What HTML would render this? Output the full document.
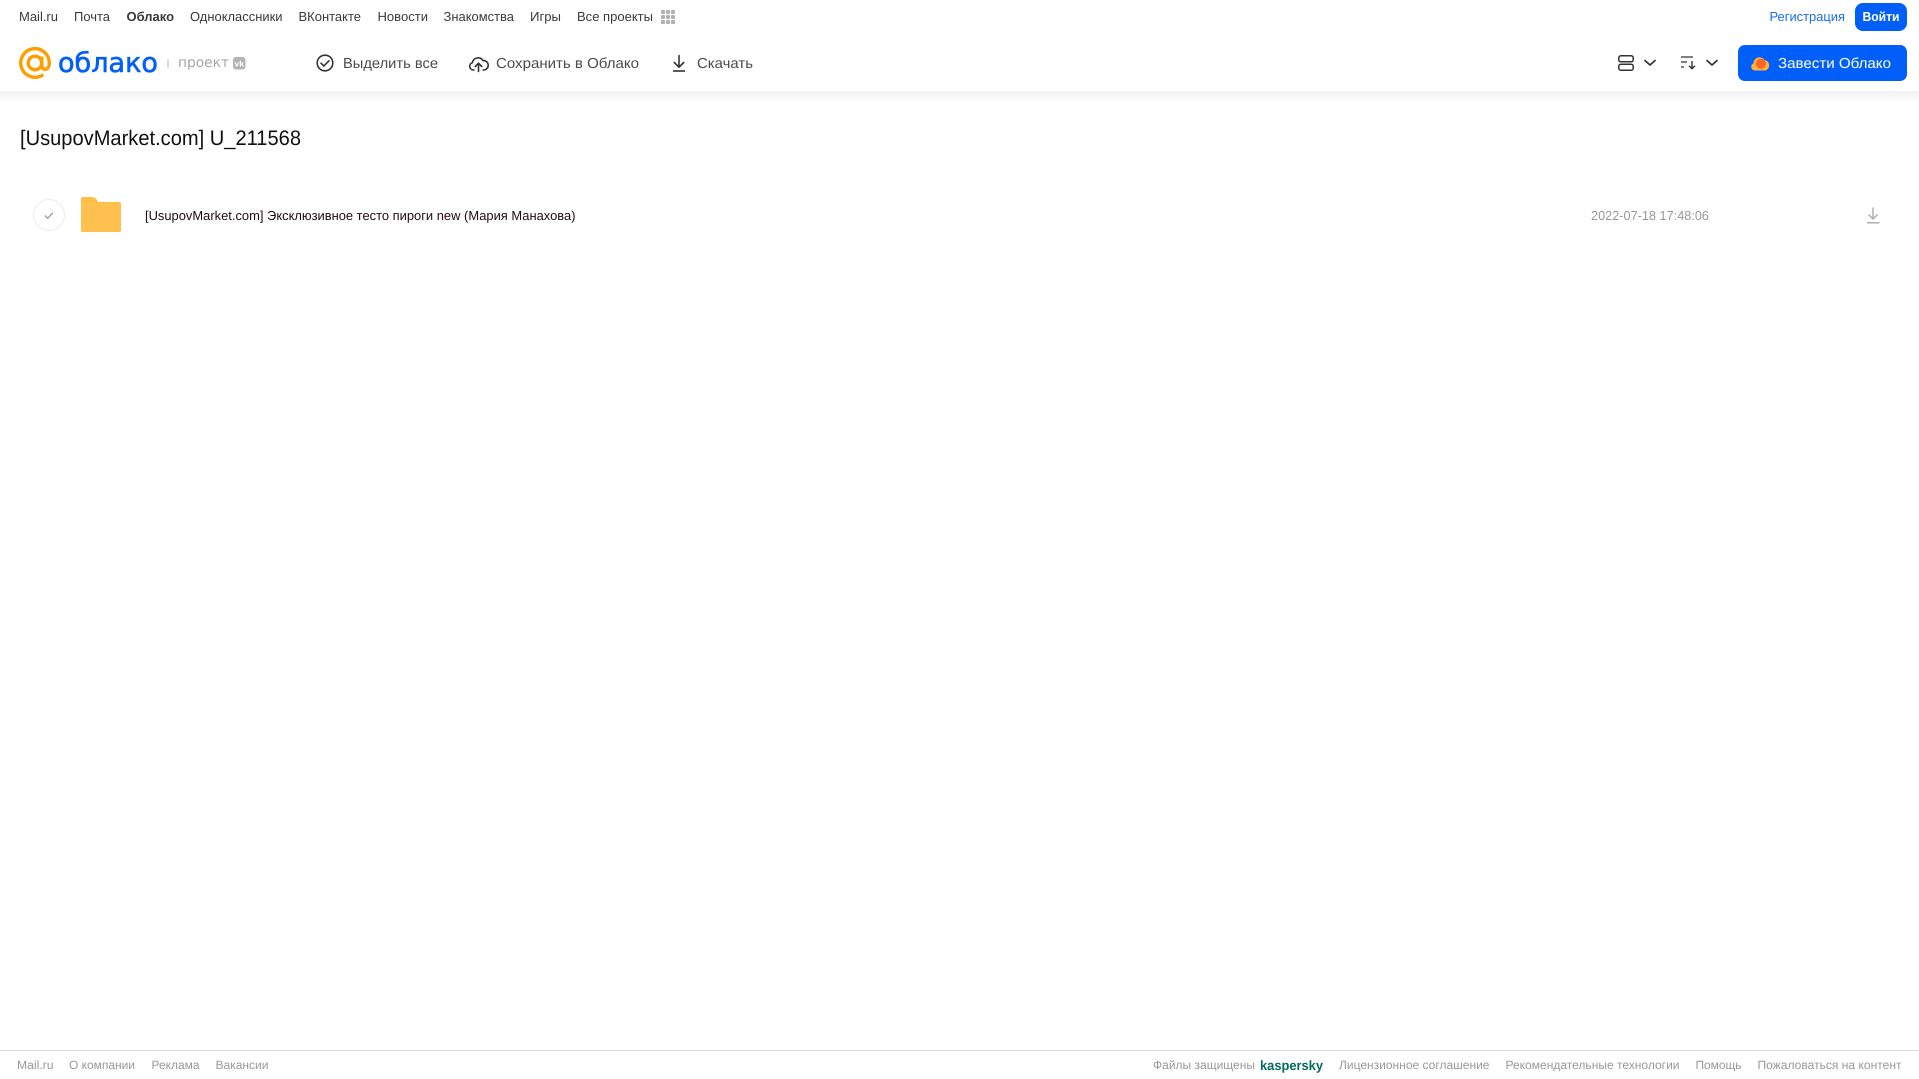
<!DOCTYPE html>
<html lang="ru"><head><meta charset="utf-8"><title>Облако</title>
<style>html,body{margin:0;padding:0;background:#fff;overflow:hidden}svg{display:block}text{font-family:"Liberation Sans","Noto Sans CJK SC",sans-serif}</style>
</head><body>
<svg width="1919" height="1079" viewBox="0 0 1919 1079" xmlns="http://www.w3.org/2000/svg" text-rendering="geometricPrecision">
<defs>
<linearGradient id="sh" x1="0" y1="0" x2="0" y2="1"><stop offset="0" stop-color="#f1f1f1"/><stop offset="1" stop-color="#fff"/></linearGradient>
<linearGradient id="fo" x1="0" y1="0" x2="0" y2="1"><stop offset="0" stop-color="#ffbf45"/><stop offset="1" stop-color="#ffc653"/></linearGradient>
</defs>
<rect x="0" y="91" width="1919" height="12" fill="url(#sh)"/>
<g font-size="13" fill="#3a3a3a">
<text x="19" y="21" textLength="39" lengthAdjust="spacingAndGlyphs">Mail.ru</text>
<text x="74" y="21" textLength="36" lengthAdjust="spacingAndGlyphs">Почта</text>
<text x="126.500" y="21" textLength="47.500" lengthAdjust="spacingAndGlyphs" font-weight="700">Облако</text>
<text x="190" y="21" textLength="92.500" lengthAdjust="spacingAndGlyphs">Одноклассники</text>
<text x="298.500" y="21" textLength="62.500" lengthAdjust="spacingAndGlyphs">ВКонтакте</text>
<text x="377.500" y="21" textLength="50.500" lengthAdjust="spacingAndGlyphs">Новости</text>
<text x="443.500" y="21" textLength="70.500" lengthAdjust="spacingAndGlyphs">Знакомства</text>
<text x="530" y="21" textLength="31" lengthAdjust="spacingAndGlyphs">Игры</text>
<text x="577" y="21" textLength="76" lengthAdjust="spacingAndGlyphs">Все проекты</text>
</g>
<g fill="#b0b0b0"><rect x="661" y="10" width="4" height="4" rx="1"/><rect x="666" y="10" width="4" height="4" rx="1"/><rect x="671" y="10" width="4" height="4" rx="1"/><rect x="661" y="15" width="4" height="4" rx="1"/><rect x="666" y="15" width="4" height="4" rx="1"/><rect x="671" y="15" width="4" height="4" rx="1"/><rect x="661" y="20" width="4" height="4" rx="1"/><rect x="666" y="20" width="4" height="4" rx="1"/><rect x="671" y="20" width="4" height="4" rx="1"/></g>
<text x="1769.500" y="21" font-size="13" fill="#1a6fe8" textLength="75.500" lengthAdjust="spacingAndGlyphs">Регистрация</text>
<rect x="1855" y="3" width="52" height="28" rx="8" fill="#005ff9"/>
<text x="1862.500" y="21" font-size="13" font-weight="700" fill="#fff" textLength="37" lengthAdjust="spacingAndGlyphs">Войти</text>
<g fill="none" stroke="#ff9e00" stroke-width="3.400">
<circle cx="35" cy="63" r="6.800"/>
<path d="M41.800 56.500V65.500c0 5.500 7.500 5.500 7.500-2.500a14.300 14.300 0 1 0-6 11.600"/>
</g>
<text x="58" y="72" font-size="27" style='font-family:"DejaVu Sans",sans-serif' fill="#005ff9" stroke="#005ff9" stroke-width=".6" textLength="100" lengthAdjust="spacingAndGlyphs">облако</text>
<rect x="167.500" y="59" width="1" height="9" fill="#bbb"/>
<text x="178" y="67" font-size="14" style='font-family:"DejaVu Sans",sans-serif' fill="#a5a5a5" textLength="51" lengthAdjust="spacingAndGlyphs">проект</text>
<rect x="233" y="57" width="12.500" height="12.500" rx="3" fill="#b4b4b4"/>
<text x="234.500" y="66.500" font-size="8" font-weight="700" fill="#fff" textLength="9.500" lengthAdjust="spacingAndGlyphs">vk</text>
<g fill="none" stroke="#333" stroke-width="1.600">
<circle cx="325" cy="63" r="7.800"/>
<path d="M321 63.200l2.900 2.800 5-5.200" stroke-linecap="round" stroke-linejoin="round"/>
<path d="M474.500 70h-1.500a3.800 3.800 0 0 1-.6-7.400 5.800 5.800 0 0 1 10.600-2 4.600 4.600 0 0 1 1 9.400h-1.500" stroke-linejoin="round"/>
<path d="M478.500 71.500V63.500M475.200 66.500l3.300-3.300 3.300 3.300" stroke-linecap="round" stroke-linejoin="round"/>
<path d="M679 55.500V67M674.300 62.500l4.700 4.700 4.700-4.700" stroke-linecap="round" stroke-linejoin="round"/>
<path d="M673 71h12"/>
</g>
<g font-size="14.500" fill="#4a4a4a">
<text x="343" y="68" textLength="95" lengthAdjust="spacingAndGlyphs">Выделить все</text>
<text x="496" y="68" textLength="143" lengthAdjust="spacingAndGlyphs">Сохранить в Облако</text>
<text x="697" y="68" textLength="56" lengthAdjust="spacingAndGlyphs">Скачать</text>
</g>
<g fill="none" stroke="#333" stroke-width="1.500">
<rect x="1618.800" y="55.800" width="14.400" height="6" rx="2"/>
<rect x="1618.800" y="64.200" width="14.400" height="6" rx="2"/>
<path d="M1645 60.500l5 4.500 5-4.500" stroke-width="1.700" stroke-linecap="round" stroke-linejoin="round"/>
<path d="M1707 60.500l5 4.500 5-4.500" stroke-width="1.700" stroke-linecap="round" stroke-linejoin="round"/>
<path d="M1681 57h12M1681 62h6M1681 67h3" stroke-width="1.300"/>
<path d="M1692 61v7.500M1689 65.800l3 3 3-3" stroke-width="1.400" stroke-linejoin="round"/>
</g>
<rect x="1738" y="45" width="169" height="36" rx="7" fill="#005ff9"/>
<path d="M1755 70.500a3.800 3.800 0 0 1-1.500-7.300 6 6 0 0 1 11-3.200 5.400 5.400 0 0 1 1 10.500z" fill="#ffb03a"/>
<circle cx="1761" cy="63.800" r="5" fill="#f8662a"/>
<text x="1778" y="68" font-size="14.500" fill="#fff" textLength="113" lengthAdjust="spacingAndGlyphs">Завести Облако</text>
<text x="20" y="145" font-size="21" fill="#111" textLength="281" lengthAdjust="spacingAndGlyphs">[UsupovMarket.com] U_211568</text>
<circle cx="49" cy="215" r="15.500" fill="#fff" stroke="#ececec"/>
<path d="M44.800 215.500l2.900 2.700 5.300-5.400" fill="none" stroke="#999" stroke-width="1.300"/>
<path d="M83 197h8.500c2.500 0 4.500 1.200 5.500 3 .6 1 1 2 2 2H119a2 2 0 0 1 2 2V230a2 2 0 0 1-2 2H83a2 2 0 0 1-2-2V199a2 2 0 0 1 2-2z" fill="url(#fo)"/>
<path d="M81 206a2 2 0 0 1 2-2h36a2 2 0 0 1 2 2v24a2 2 0 0 1-2 2H83a2 2 0 0 1-2-2z" fill="#ffc04e"/>
<text x="145" y="220" font-size="13" fill="#200a14" textLength="430.500" lengthAdjust="spacingAndGlyphs">[UsupovMarket.com] Эксклюзивное тесто пироги new (Мария Манахова)</text>
<text x="1591" y="220" font-size="13" fill="#999" textLength="118" lengthAdjust="spacingAndGlyphs">2022-07-18 17:48:06</text>
<g fill="none" stroke="#aaa" stroke-width="1.400"><path d="M1873 207.500V219M1868.500 214.500l4.500 4.500 4.500-4.500"/><path d="M1867 222.800h12.500"/></g>
<rect x="0" y="1050" width="1919" height="1" fill="#dcdcdc"/>
<g font-size="12" fill="#999">
<text x="17" y="1069" textLength="36.500" lengthAdjust="spacingAndGlyphs">Mail.ru</text>
<text x="69" y="1069" textLength="66" lengthAdjust="spacingAndGlyphs">О компании</text>
<text x="151.500" y="1069" textLength="48" lengthAdjust="spacingAndGlyphs">Реклама</text>
<text x="215.500" y="1069" textLength="53" lengthAdjust="spacingAndGlyphs">Вакансии</text>
<text x="1153" y="1069" textLength="102" lengthAdjust="spacingAndGlyphs">Файлы защищены</text>
<text x="1260" y="1070" font-size="13.500" font-weight="700" fill="#006d5c" textLength="63" lengthAdjust="spacingAndGlyphs">kaspersky</text>
<text x="1339" y="1069" textLength="150.500" lengthAdjust="spacingAndGlyphs">Лицензионное соглашение</text>
<text x="1505.500" y="1069" textLength="174" lengthAdjust="spacingAndGlyphs">Рекомендательные технологии</text>
<text x="1695.500" y="1069" textLength="46" lengthAdjust="spacingAndGlyphs">Помощь</text>
<text x="1757.500" y="1069" textLength="144" lengthAdjust="spacingAndGlyphs">Пожаловаться на контент</text>
</g>
</svg>
</body></html>
